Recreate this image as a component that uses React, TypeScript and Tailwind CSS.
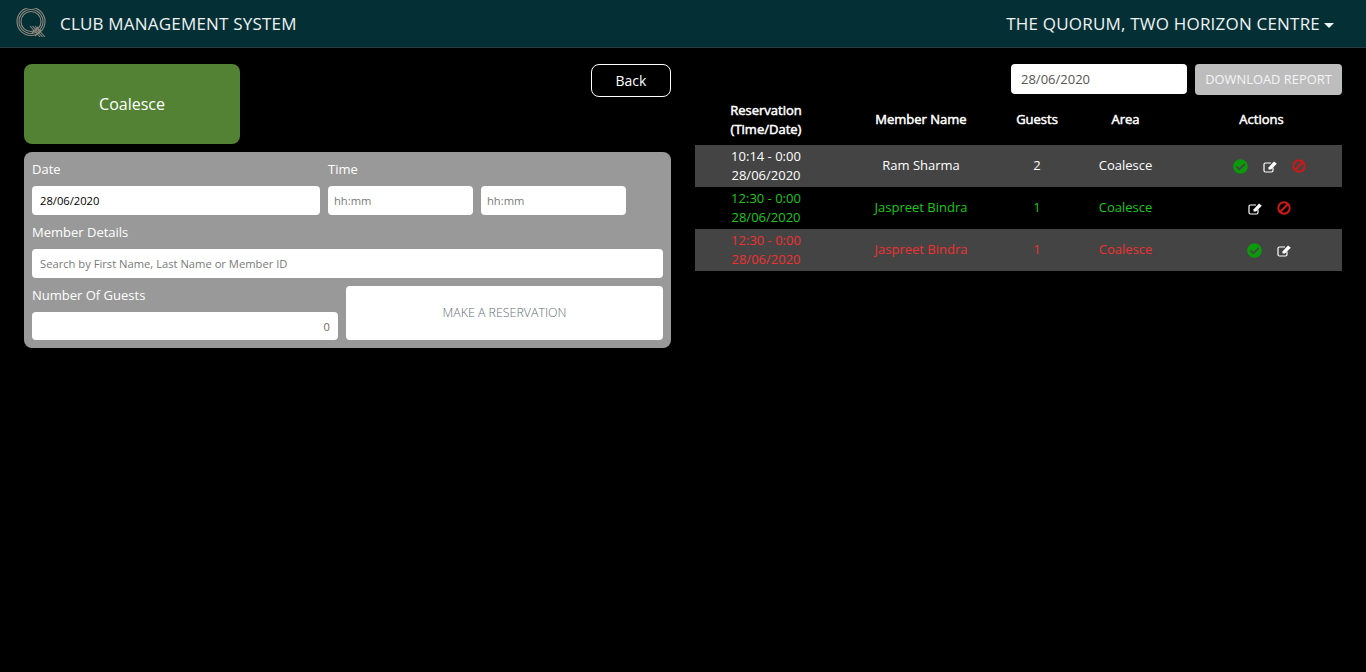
import React from "react";
import { FaCheckCircle } from "react-icons/fa";

type Reservation = {
  time: string;
  date: string;
  name: string;
  guests: number;
  area: string;
  color: string;
  shaded: boolean;
  actions: string[];
};

const reservations: Reservation[] = [
  {
    time: "10:14 - 0:00",
    date: "28/06/2020",
    name: "Ram Sharma",
    guests: 2,
    area: "Coalesce",
    color: "text-white",
    shaded: true,
    actions: ["check", "edit", "ban"],
  },
  {
    time: "12:30 - 0:00",
    date: "28/06/2020",
    name: "Jaspreet Bindra",
    guests: 1,
    area: "Coalesce",
    color: "text-[#18c918]",
    shaded: false,
    actions: ["edit", "ban"],
  },
  {
    time: "12:30 - 0:00",
    date: "28/06/2020",
    name: "Jaspreet Bindra",
    guests: 1,
    area: "Coalesce",
    color: "text-[#f03030]",
    shaded: true,
    actions: ["check", "edit"],
  },
];

const columns = "grid grid-cols-[142px_168px_64px_112px_161px] items-center text-center";
const field =
  "block rounded-[4px] bg-white px-2 text-[11.2px] outline-none placeholder:text-[#7a7a7a]";

function Logo() {
  return (
    <svg width="32" height="32" viewBox="0 0 32 32" fill="none" stroke="#8f897d" strokeWidth="1.1">
      <circle cx="15" cy="13.500" r="14" />
      <circle cx="15" cy="13.500" r="12" />
      <circle cx="15" cy="13.500" r="10" />
      <path d="M14 18l10 11M16.500 18l10 11M19 18l10 11M19 28l6-6M16 25l6-6" />
    </svg>
  );
}

function EditIcon() {
  return (
    <svg width="15" height="13" viewBox="0 0 15 13" className="ml-[1px]">
      <path
        d="M10 7.500V10.500A1.500 1.500 0 0 1 8.500 12H2.500A1.500 1.500 0 0 1 1 10.500V4.500A1.500 1.500 0 0 1 2.500 3H8"
        fill="none"
        stroke="#ffffff"
        strokeWidth="1.200"
      />
      <path d="M5.500 7.500L11 1.500 13.800 3.800 8 9.500H5.500Z" fill="#ffffff" />
    </svg>
  );
}

function BanIcon() {
  return (
    <svg width="14" height="14" viewBox="0 0 14 14" fill="none" stroke="#d01818" strokeWidth="2">
      <circle cx="7" cy="7" r="5.700" />
      <path d="M3 11L11 3" />
    </svg>
  );
}

function ActionIcon({ kind }: { kind: string }) {
  if (kind === "check") return <FaCheckCircle className="text-[15px] text-[#0a9a0a]" />;
  if (kind === "edit") return <EditIcon />;
  return <BanIcon />;
}

export default function App() {
  return (
    <div className="min-h-[672px] bg-black font-['Open_Sans',sans-serif] text-white">
      <header className="flex h-[48px] items-center justify-between border-b border-[#2b3d40] bg-[#042f35] pl-[16px] pr-[32px] text-[#eef3f3]">
        <div className="flex items-center gap-[12px]">
          <Logo />
          <span className="text-[17px] font-medium tracking-[0.2px]">CLUB MANAGEMENT SYSTEM</span>
        </div>
        <div className="flex items-center gap-[4px]">
          <span className="text-[17px] font-medium tracking-[0.2px]">
            THE QUORUM, TWO HORIZON CENTRE
          </span>
          <span className="mt-[3px] border-x-[5px] border-t-[5px] border-x-transparent border-t-[#eef3f3]" />
        </div>
      </header>

      <main className="flex gap-[24px] px-[24px] pt-[16px]">
        <section className="w-[647px]">
          <div className="flex items-start justify-between">
            <div className="flex h-[80px] w-[216px] items-center justify-center rounded-[8px] bg-[#548235] text-[16px]">
              Coalesce
            </div>
            <button
              type="button"
              className="h-[33px] w-[80px] rounded-[8px] border border-white bg-black text-[14px] text-white"
            >
              Back
            </button>
          </div>

          <form className="mt-[8px] rounded-[8px] bg-[#999999] p-[8px] text-[13px]">
            <div className="flex gap-[8px]">
              <div className="w-[288px]">
                <label className="mb-[8px] block h-[18px] leading-[18px]">Date</label>
                <input readOnly value="28/06/2020" className={`${field} h-[29px] w-full text-black`} />
              </div>
              <div>
                <label className="mb-[8px] block h-[18px] leading-[18px]">Time</label>
                <div className="flex gap-[8px]">
                  <input placeholder="hh:mm" className={`${field} h-[29px] w-[145px] !px-[6px]`} />
                  <input placeholder="hh:mm" className={`${field} h-[29px] w-[145px] !px-[6px]`} />
                </div>
              </div>
            </div>

            <label className="mb-[8px] mt-[8px] block h-[18px] leading-[18px]">Member Details</label>
            <input
              placeholder="Search by First Name, Last Name or Member ID"
              className={`${field} h-[29px] w-full`}
            />

            <div className="mt-[8px] flex gap-[8px]">
              <div className="w-[306px]">
                <label className="mb-[8px] block h-[18px] leading-[18px]">Number Of Guests</label>
                <input
                  readOnly
                  value="0"
                  className={`${field} h-[28px] w-full text-right text-[#7a6a5a]`}
                />
              </div>
              <button
                type="button"
                className="h-[54px] w-[317px] rounded-[4px] bg-white text-[12.400px] font-light text-[#5f6e75]"
              >
                MAKE A RESERVATION
              </button>
            </div>
          </form>
        </section>

        <section className="w-[647px]">
          <div className="flex items-start justify-end gap-[8px]">
            <input
              readOnly
              value="28/06/2020"
              className="h-[30px] w-[176px] rounded-[4px] bg-white px-[10px] text-[13px] text-[#555555] outline-none"
            />
            <button
              type="button"
              className="h-[31px] w-[147px] rounded-[4px] bg-[#bdbdbd] text-[12.900px] text-[#f4f4f4]"
            >
              DOWNLOAD REPORT
            </button>
          </div>

          <div
            className={`${columns} mt-[6px] h-[44px] pb-[7px] text-[13px] leading-[19px] [-webkit-text-stroke:0.5px_white]`}
          >
            <div>
              Reservation
              <br />
              (Time/Date)
            </div>
            <div className="pb-[2px]">Member Name</div>
            <div className="pb-[2px]">Guests</div>
            <div className="pb-[2px] pl-[1px]">Area</div>
            <div className="pb-[2px]">Actions</div>
          </div>

          {reservations.map((r, i) => (
            <div
              key={i}
              className={`${columns} h-[42px] text-[13px] leading-[19px] ${r.color} ${
                r.shaded ? "bg-[#444444]" : "bg-black"
              }`}
            >
              <div>
                {r.time}
                <br />
                {r.date}
              </div>
              <div className="pb-[2px]">{r.name}</div>
              <div className="pb-[2px]">{r.guests}</div>
              <div className="pb-[2px] pl-[1px]">{r.area}</div>
              <div className="flex items-center justify-center gap-[14px] pl-[15px]">
                {r.actions.map((a) => (
                  <ActionIcon key={a} kind={a} />
                ))}
              </div>
            </div>
          ))}
        </section>
      </main>
    </div>
  );
}
